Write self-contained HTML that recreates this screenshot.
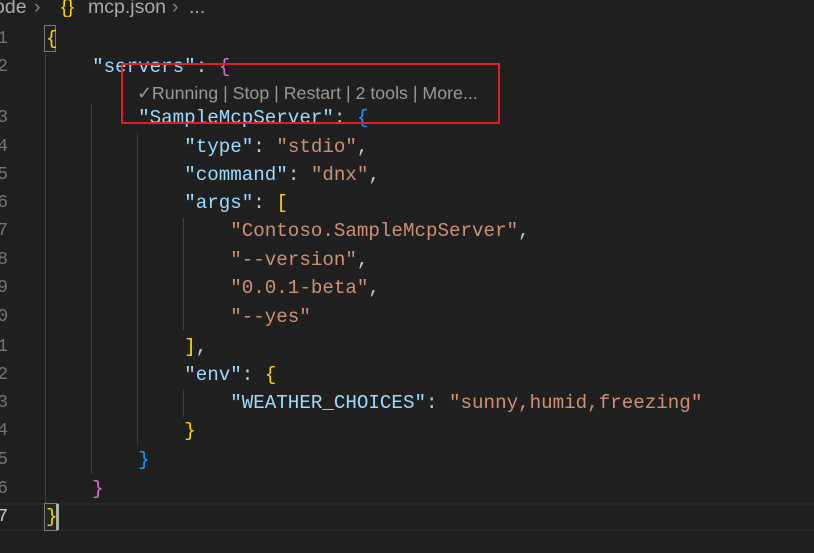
<!DOCTYPE html>
<html><head><meta charset="utf-8"><style>
body{margin:0;width:814px;height:553px;background:#1f1f1f;overflow:hidden;position:relative;font-family:"Liberation Mono",monospace;}
.l{position:absolute;left:46px;height:28px;line-height:28px;font-size:19.2px;color:#cccccc;white-space:pre;}
.n{position:absolute;left:-6px;width:14px;text-align:right;height:28px;line-height:28px;font-size:18px;color:#6e7681;font-family:"Liberation Mono",monospace;}
.k{color:#9cdcfe}.s{color:#ce9178}.y{color:#ffd700}.p{color:#da70d6}.b{color:#179fff}
.g{position:absolute;width:1px;background:#404040;}
.bc{position:absolute;top:-5px;font-family:'Liberation Sans',sans-serif;font-size:19.5px;line-height:24px;color:#a9a9a9;white-space:pre}
</style></head><body>
<div class="bc" style="left:-6px">ode</div>
<div class="bc" style="left:34px;color:#888">&#8250;</div>
<div class="bc" style="left:61px" ><span class="y">{}</span></div>
<div class="bc" style="left:88px">mcp.json</div>
<div class="bc" style="left:172px;color:#888">&#8250;</div>
<div class="bc" style="left:189px">...</div>
<div style="position:absolute;left:0;top:503px;width:814px;height:28px;border-top:2px solid #282828;border-bottom:2px solid #282828;box-sizing:border-box"></div>
<div class="g" style="left:45px;top:53px;height:450px"></div>
<div class="g" style="left:91px;top:104px;height:370px"></div>
<div class="g" style="left:137px;top:133px;height:312px"></div>
<div class="g" style="left:183px;top:218px;height:112px"></div>
<div class="g" style="left:183px;top:389px;height:28px"></div>
<div style="position:absolute;left:44px;top:25px;width:12px;height:27px;border:1px solid #7a7a7a;box-sizing:border-box"></div>
<div style="position:absolute;left:44px;top:503px;width:14px;height:28px;background:#1e2a1e;border:1px solid #7a7a7a;box-sizing:border-box"></div>
<div style="position:absolute;left:56px;top:504px;width:3px;height:26px;background:#aeafad"></div>

<div class="n" style="top:25px">1</div><div class="l" style="top:25px"><span class="y">{</span></div>
<div class="n" style="top:53px">2</div><div class="l" style="top:53px">    <span class="k">"servers"</span>: <span class="p">{</span></div>
<div style="position:absolute;left:137px;top:81px;font-family:'Liberation Sans',sans-serif;font-size:17.8px;color:#999;white-space:pre;line-height:24px">✓Running | Stop | Restart | 2 tools | More...</div>
<div class="n" style="top:104px">3</div><div class="l" style="top:104px">        <span class="k">"SampleMcpServer"</span>: <span class="b">{</span></div>
<div class="n" style="top:133px">4</div><div class="l" style="top:133px">            <span class="k">"type"</span>: <span class="s">"stdio"</span>,</div>
<div class="n" style="top:161px">5</div><div class="l" style="top:161px">            <span class="k">"command"</span>: <span class="s">"dnx"</span>,</div>
<div class="n" style="top:189px">6</div><div class="l" style="top:189px">            <span class="k">"args"</span>: <span class="y">[</span></div>
<div class="n" style="top:217px">7</div><div class="l" style="top:217px">                <span class="s">"Contoso.SampleMcpServer"</span>,</div>
<div class="n" style="top:246px">8</div><div class="l" style="top:246px">                <span class="s">"--version"</span>,</div>
<div class="n" style="top:274px">9</div><div class="l" style="top:274px">                <span class="s">"0.0.1-beta"</span>,</div>
<div class="n" style="top:303px">0</div><div class="l" style="top:303px">                <span class="s">"--yes"</span></div>
<div class="n" style="top:333px">1</div><div class="l" style="top:333px">            <span class="y">]</span>,</div>
<div class="n" style="top:361px">2</div><div class="l" style="top:361px">            <span class="k">"env"</span>: <span class="y">{</span></div>
<div class="n" style="top:389px">3</div><div class="l" style="top:389px">                <span class="k">"WEATHER_CHOICES"</span>: <span class="s">"sunny,humid,freezing"</span></div>
<div class="n" style="top:417px">4</div><div class="l" style="top:417px">            <span class="y">}</span></div>
<div class="n" style="top:446px">5</div><div class="l" style="top:446px">        <span class="b">}</span></div>
<div class="n" style="top:475px">6</div><div class="l" style="top:475px">    <span class="p">}</span></div>
<div class="n" style="top:503px;color:#ccc">7</div><div class="l" style="top:503px"><span class="y">}</span></div>
<div style="position:absolute;left:121px;top:63px;width:379px;height:61px;outline:2px solid #e01e28;outline-offset:-2px"></div>
</body></html>
